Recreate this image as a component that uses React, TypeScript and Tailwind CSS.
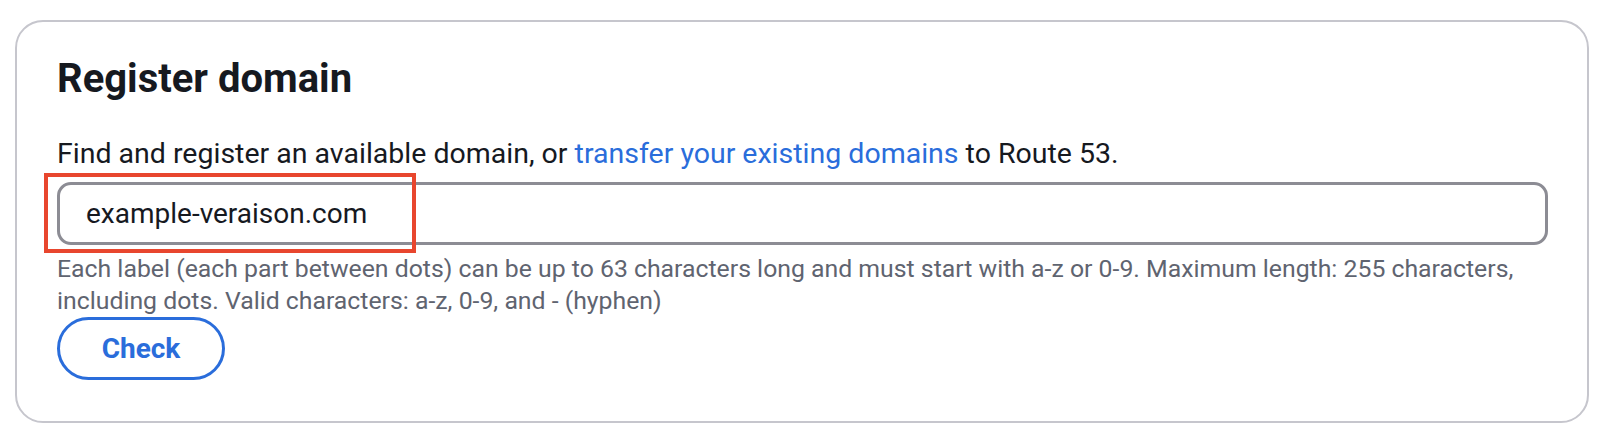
export default function App() {
  return (
    <div className="min-h-[442px] bg-white pl-[15px] pr-[19px] pt-[20px] font-['Roboto',Arial,sans-serif]">
      <div className="flex h-[403px] flex-col rounded-[28px] border-2 border-[#c6c6cd] pl-[40px] pr-[40px] pt-[33px]">
        <h2 className="text-[40px] font-bold leading-[48px] text-[#16191f]">Register domain</h2>

        <p className="mt-[33px] text-[28.5px] leading-[36px] text-[#16191f]">
          Find and register an available domain, or{" "}
          <a href="#" className="text-[#2a6ddb]">
            transfer your existing domains
          </a>{" "}
          to Route 53.
        </p>

        <div className="relative mt-[10px] w-[1491px]">
          <input
            type="text"
            defaultValue="example-veraison.com"
            className="block h-[63px] w-full rounded-[14px] border-[3px] border-[#8c8c94] pl-[26px] text-[28px] leading-[57px] text-[#16191f] outline-none"
          />
          <div className="pointer-events-none absolute left-[-13px] top-[-9px] h-[80px] w-[372px] border-4 border-[#e8462e]" />
        </div>

        <p className="mt-[8px] w-[1491px] text-[24.8px] leading-[32px] text-[#5f6470]">
          Each label (each part between dots) can be up to 63 characters long and must start with a-z or 0-9. Maximum length: 255 characters, including dots. Valid characters: a-z, 0-9, and - (hyphen)
        </p>

        <div>
          <button className="h-[63px] w-[168px] rounded-full border-[3px] border-[#2a6ddb] text-[28px] font-bold text-[#2a6ddb]">
            Check
          </button>
        </div>
      </div>
    </div>
  );
}
